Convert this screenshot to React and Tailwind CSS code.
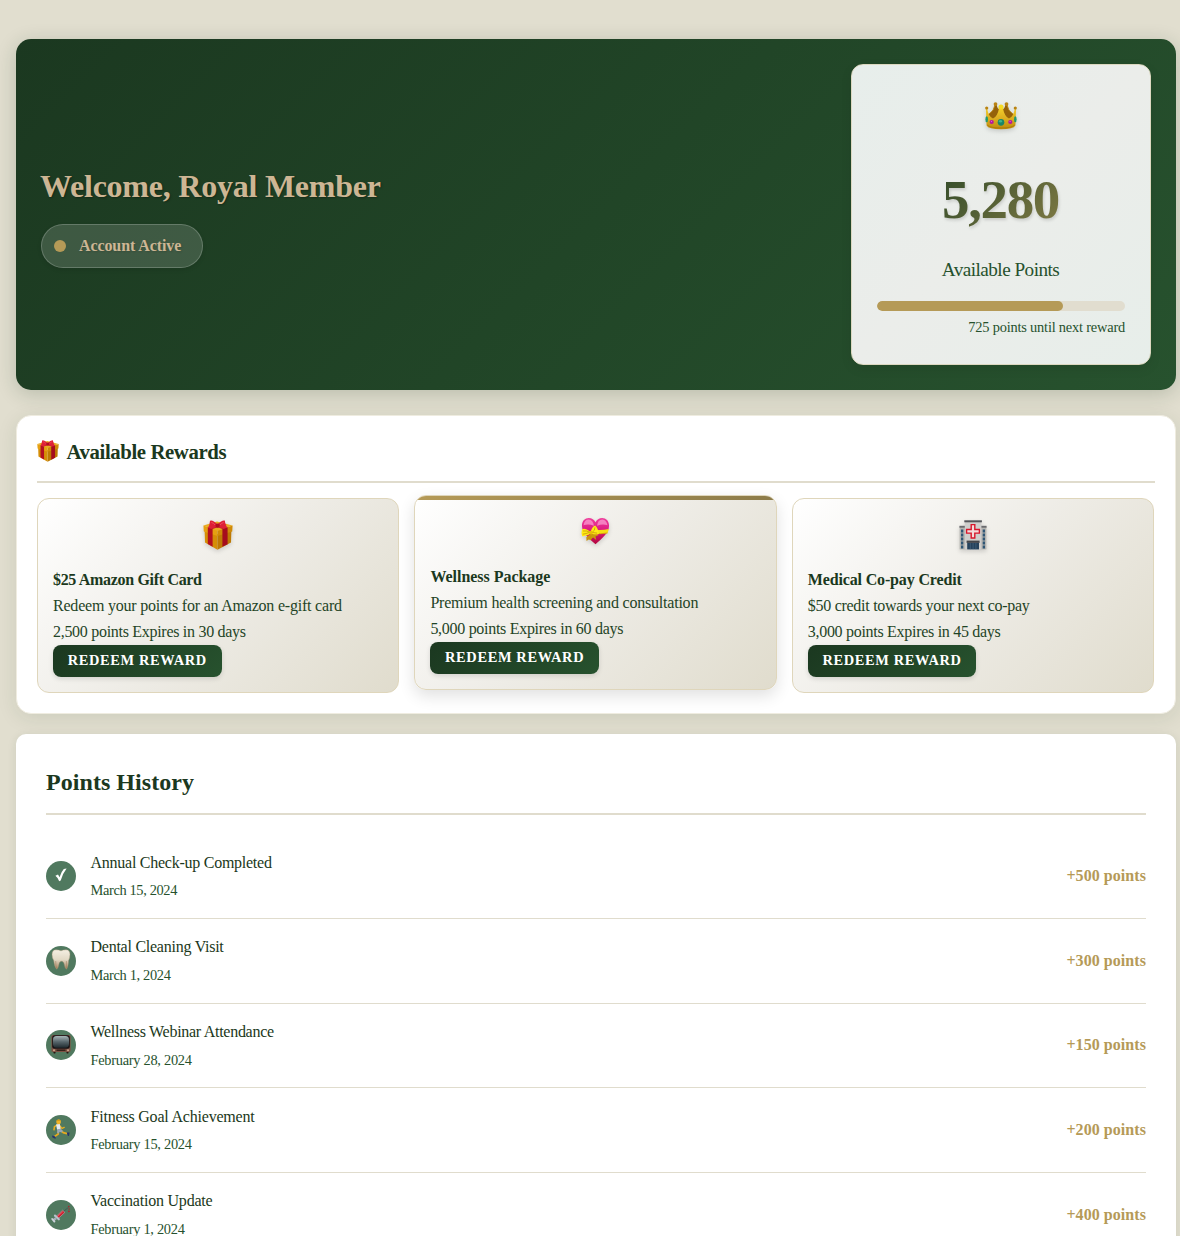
function Crown({ className }) {
  return (
    <svg viewBox="0 0 32 28" className={className}>
      <defs>
        <linearGradient id="crownGold" x1="0" y1="0" x2="0" y2="1">
          <stop offset="0" stopColor="#f3cf2a" />
          <stop offset="0.5" stopColor="#dcae20" />
          <stop offset="1" stopColor="#bd8a0c" />
        </linearGradient>
      </defs>
      <path d="M9.6 2.5 Q9.4 8.5 3 12.5 L4 19 H15.5 L15.5 8 Q12.2 7 11.6 2.5Z M22.4 2.5 Q22.6 8.5 29 12.5 L28 19 H16.5 L16.5 8 Q19.8 7 20.4 2.5Z" fill="#95620a" />
      <path d="M9.9 3 Q9.6 8.5 3.4 12.6 M22.1 3 Q22.4 8.5 28.6 12.6" fill="none" stroke="#c08b14" strokeWidth="0.8" />
      <path d="M0.9 7 H2.3 Q3.4 14.6 8 16.6 Q12.6 14.5 14.2 5.5 H17.8 Q19.4 14.5 24 16.6 Q28.6 14.6 29.7 7 H31.1 L30.4 23.5 Q28.5 27.3 16 27.3 Q3.5 27.3 1.6 23.5 Z" fill="url(#crownGold)" />
      <path d="M2.3 23 Q5 26 16 26 Q27 26 29.7 23" fill="none" stroke="#a87607" strokeWidth="0.8" />
      <g fill="#b98313">
        <circle cx="10.5" cy="2.1" r="1.9" />
        <circle cx="21.5" cy="2.1" r="1.9" />
        <circle cx="1.7" cy="6" r="1.6" />
        <circle cx="30.3" cy="6" r="1.6" />
      </g>
      <circle cx="16" cy="5" r="2.5" fill="#f6dc22" />
      <ellipse cx="16" cy="20.3" rx="3.3" ry="3.4" fill="#1a8767" />
      <ellipse cx="15.5" cy="19.3" rx="1.6" ry="1.3" fill="#3fb58b" />
      <circle cx="6.7" cy="20" r="2.1" fill="#b5159c" />
      <circle cx="25.3" cy="20" r="2.1" fill="#b5159c" />
      <circle cx="6.5" cy="19.5" r="0.7" fill="#e05bd0" />
      <circle cx="25.1" cy="19.5" r="0.7" fill="#e05bd0" />
      <ellipse cx="1.7" cy="17.3" rx="1.3" ry="3" fill="#22996f" />
      <ellipse cx="30.3" cy="17.3" rx="1.3" ry="3" fill="#22996f" />
    </svg>
  );
}

function Gift({ className }) {
  return (
    <svg viewBox="0 0 30 30" className={className}>
      <path d="M1.6 9.5 L14.5 14 V29.7 L2 22.5 Z" fill="#d58e06" />
      <path d="M28.4 9.5 L14.5 14 V29.7 L28 22.5 Z" fill="#bd7a04" />
      <path d="M0.4 5.5 L14.5 10 V16 L0.8 11.6 Z" fill="#e5a011" />
      <path d="M29.6 5.5 L14.5 10 V16 L29.2 11.6 Z" fill="#cf8a08" />
      <path d="M0.4 5.5 L14 1.5 L29.6 5.5 L14.5 11 Z" fill="#e9ab22" />
      <path d="M4.8 7.3 L9.6 8.8 V26.7 L4.8 23.9 Z" fill="#b3101f" />
      <path d="M19.4 8.8 L24.6 7.3 V24.2 L19.4 26.8 Z" fill="#a50c1d" />
      <path d="M4.8 7.3 L19 2.8 L23.5 4.2 L9.6 9 Z M24.6 7.3 L10 2.8 L6.5 4.2 L19.4 9 Z" fill="#c41a2a" />
      <path d="M14.5 4.6 Q9.5 -0.6 7 0.8 Q6.8 5 5 8 Q10 9.2 14.5 6.6 Q20 9.5 24.2 7.7 Q22 5 21.8 0.6 Q19 -0.2 14.5 4.6Z" fill="#de2036" />
      <path d="M8.3 2.4 Q10.5 2.8 12 5 M20.6 2.4 Q18.8 3 17 5" stroke="#ee5267" strokeWidth="0.8" fill="none" />
      <ellipse cx="14.6" cy="5.6" rx="2.1" ry="2.2" fill="#b20d22" />
    </svg>
  );
}

function RibbonHeart({ className }) {
  return (
    <svg viewBox="0 0 30 28" className={className}>
      <defs>
        <linearGradient id="heartPink" x1="0" y1="0" x2="0" y2="1">
          <stop offset="0" stopColor="#ee3f9c" />
          <stop offset="0.4" stopColor="#de1f86" />
          <stop offset="1" stopColor="#b3063c" />
        </linearGradient>
      </defs>
      <path d="M15 27.7 C9 22 1 16.5 1 8.5 C1 3.5 4.2 0.6 8 0.6 C11.3 0.6 13.8 2.3 15 5 C16.2 2.3 18.7 0.6 22 0.6 C25.8 0.6 29 3.5 29 8.5 C29 16.5 21 22 15 27.7Z" fill="url(#heartPink)" />
      <path d="M2.6 8 Q3.5 2 8 2 Q12.5 2.4 13.4 8.5 Q8 6.5 2.6 8Z M16.6 8.5 Q17.5 2 22 2 Q26.5 2.4 27.4 8 Q22 6.5 16.6 8.5Z" fill="#f99bcf" opacity="0.75" />
      <path d="M14 12.6 Q21 13.5 28.8 12 L27.4 16.4 Q20 17.8 14 16.8Z" fill="#f7df12" />
      <path d="M14 16.6 Q20 17.5 27.4 16" stroke="#c98d05" strokeWidth="0.7" fill="none" />
      <path d="M10.5 16.5 L5.5 20.5 L5.7 24.3 L8 22.8 L10.3 23.6 L13 17.5 Z" fill="#c9930a" />
      <path d="M11 16.5 L9.8 22.5 L12.7 20.8 L15.8 23.4 L15 19.8 L18.3 18.2 Z" fill="#c99a0a" />
      <path d="M9.5 14.5 Q4 10.4 1 12.4 Q0 16 1.2 19.4 Q6.5 19.8 10.3 16.4 Q14.5 18.6 18.6 17.2 Q17.8 11.4 14.6 8.4 Q11.6 9.5 10.3 14Z" fill="#ffeb14" />
      <path d="M2 14 Q6 13.4 9.2 15.3 Q5 17 1.8 17.3 M14.4 10.3 Q14.7 13.5 11.5 15.5 L16.7 16.2" stroke="#bd8a05" strokeWidth="0.7" fill="none" />
      <ellipse cx="10.3" cy="15.6" rx="1.8" ry="1.9" fill="#e6be08" />
    </svg>
  );
}

function Hospital({ className }) {
  return (
    <svg viewBox="0 0 28 30" className={className}>
      <rect x="0.6" y="7" width="7" height="22.4" fill="#b4b3b0" />
      <rect x="20.4" y="7" width="7" height="22.4" fill="#b4b3b0" />
      <rect x="0.4" y="5.8" width="6" height="1.9" fill="#6a6b6e" />
      <rect x="21.6" y="5.8" width="6" height="1.9" fill="#6a6b6e" />
      <rect x="5.8" y="1.5" width="16.6" height="27.9" fill="#cfcecc" />
      <rect x="5.3" y="0.3" width="17.6" height="2" fill="#55565a" />
      <g fill="#2f5675">
        <rect x="2" y="9.5" width="2.3" height="3" />
        <rect x="2" y="13.5" width="2.3" height="3" />
        <rect x="2" y="17.5" width="2.3" height="3" />
        <rect x="2" y="21.5" width="2.3" height="3" />
        <rect x="2" y="25.5" width="2.3" height="3" />
        <rect x="23.7" y="9.5" width="2.3" height="3" />
        <rect x="23.7" y="13.5" width="2.3" height="3" />
        <rect x="23.7" y="17.5" width="2.3" height="3" />
        <rect x="23.7" y="21.5" width="2.3" height="3" />
        <rect x="23.7" y="25.5" width="2.3" height="3" />
      </g>
      <path d="M12.2 4.6 h3.6 v4.9 h4.6 v3.6 h-4.6 v4.9 h-3.6 v-4.9 h-4.6 v-3.6 h4.6 Z" fill="#f3dcdc" stroke="#d9162b" strokeWidth="1.4" />
      <rect x="7.6" y="20.6" width="13" height="2.3" fill="#45464a" />
      <rect x="8.2" y="22.9" width="11.8" height="6.5" fill="#26425c" />
      <path d="M11.3 23 v6.4 M14.1 23 v6.4 M16.9 23 v6.4" stroke="#55748c" strokeWidth="0.5" />
    </svg>
  );
}

function Check() {
  return (
    <svg viewBox="0 0 12 14" className="-mt-[2px] h-[14px] w-[12px]">
      <path d="M0.4 7.8 L3 6.4 Q4 7.8 4.5 9.2 Q6.2 3.6 8.8 0.9 L11.6 0.6 Q7.6 5.8 5.7 12.4 L4.2 13.2 Q2.8 9.6 0.4 7.8Z" fill="#fff" />
    </svg>
  );
}

function Tooth() {
  return (
    <svg viewBox="0 0 20 21" className="-mt-[3px] h-[21px] w-[20px]">
      <defs>
        <linearGradient id="toothIvory" x1="0" y1="0" x2="0" y2="1">
          <stop offset="0" stopColor="#f4efe2" />
          <stop offset="0.5" stopColor="#e2d9c5" />
          <stop offset="1" stopColor="#a5835f" />
        </linearGradient>
      </defs>
      <path d="M1 5.5 Q1 0.8 5 0.8 Q8 0.8 10 1.8 Q12 0.8 15 0.8 Q19 0.8 19 5.5 Q19 9 17.6 11.5 Q17.3 18 15.6 20.2 Q13.8 19.5 13.4 16 Q12.8 12.3 10.6 12.3 Q8.2 12.3 7.8 16 Q7.3 19.5 5.6 20.2 Q3.2 17.5 2.7 11.5 Q1 9 1 5.5Z" fill="url(#toothIvory)" stroke="#a18d70" strokeWidth="0.4" />
      <path d="M4.7 12 Q4.7 16 5.4 19 M15.4 12 Q15.6 16 15.2 19" stroke="#9a7452" strokeWidth="0.8" opacity="0.6" fill="none" />
    </svg>
  );
}

function Television() {
  return (
    <svg viewBox="0 0 20 20" className="-mt-[3px] h-[20px] w-[20px]">
      <defs>
        <linearGradient id="tvScreen" x1="0" y1="0" x2="0" y2="1">
          <stop offset="0" stopColor="#a5b3b5" />
          <stop offset="0.5" stopColor="#56656a" />
          <stop offset="1" stopColor="#202c30" />
        </linearGradient>
      </defs>
      <path d="M2 17 h3 l-0.8 2.6 h-1.4Z M15 17 h3 l-0.8 2.6 h-1.4Z" fill="#2a1410" />
      <rect x="0.4" y="1" width="19.2" height="17" rx="1.6" fill="#7c5244" />
      <rect x="1.2" y="1.3" width="17.6" height="13.5" rx="2.5" fill="#171314" />
      <rect x="2" y="2.1" width="16" height="11.6" rx="3.6" fill="url(#tvScreen)" />
      <rect x="5.5" y="15.4" width="9" height="1.6" fill="#352019" />
      <circle cx="3" cy="16.2" r="1" fill="#d1a78e" />
      <circle cx="17" cy="16.2" r="1" fill="#d1a78e" />
    </svg>
  );
}

function Runner() {
  return (
    <svg viewBox="0 0 18 20" className="-mt-[2px] h-[20px] w-[18px]">
      <path d="M6.4 11.5 L6.2 15 L2.6 17.4" stroke="#e5a91f" strokeWidth="1.8" fill="none" strokeLinejoin="round" />
      <path d="M8.5 11.4 L11.4 13.6 L15 14.6" stroke="#e5a91f" strokeWidth="1.8" fill="none" />
      <path d="M5 6 L2.4 7.8 L2 10.8" stroke="#e7ad22" strokeWidth="1.5" fill="none" strokeLinecap="round" />
      <path d="M8 7 L10 9.4 L12.2 8.4" stroke="#e7ad22" strokeWidth="1.4" fill="none" strokeLinecap="round" />
      <path d="M4 5.4 L7.8 4.8 L8.8 10.2 L5.2 10.9Z" fill="#e8ebee" />
      <path d="M5.2 10.2 L8.8 9.8 L11 12 L9.6 13.6 L7.4 12.8 L6.8 14.6 L5.2 14Z" fill="#99a7b5" />
      <circle cx="6.6" cy="2.9" r="2.4" fill="#f0b429" />
      <path d="M4.3 2.3 Q5 0.2 7 0.4 Q8.6 0.7 8.9 1.8Z" fill="#d79b12" />
      <path d="M0 16.6 L3.2 17.6 L4 19.4 L2.4 19.4 L0.3 18.3Z M14.8 13.6 L17.6 13.4 L17 17 L15.8 16.8Z" fill="#29346a" />
    </svg>
  );
}

function Syringe() {
  return (
    <svg viewBox="0 0 20 18" className="-mt-[2px] h-[18px] w-[20px]">
      <path d="M13 6 L17.4 2.4" stroke="#3f4b50" strokeWidth="0.7" />
      <path d="M4.8 11.8 L11.6 5.2 L13.9 7.4 L7 13.8Z" fill="#cf1d2c" stroke="#a7b1b4" strokeWidth="0.6" />
      <path d="M6.5 11.5 L12 6.4" stroke="#f0808a" strokeWidth="0.6" />
      <path d="M4 10.6 L7.8 14.3" stroke="#b8c1cb" strokeWidth="2.2" strokeLinecap="round" />
      <path d="M5 13.2 L2.4 15.3" stroke="#a7b0bb" strokeWidth="2.4" />
      <path d="M1.2 14 L3.4 16.6" stroke="#cdd3da" strokeWidth="1.8" strokeLinecap="round" />
      <circle cx="17.8" cy="1.6" r="0.8" fill="#b61c28" />
      <circle cx="18.1" cy="4" r="0.7" fill="#b61c28" />
      <circle cx="17.9" cy="6.4" r="0.8" fill="#b61c28" />
    </svg>
  );
}

const rewards = [
  {
    icon: <Gift className="-ml-[1px] h-[30px] w-[30px]" />,
    title: "$25 Amazon Gift Card",
    titleClass: "tracking-[-0.322px]",
    text: "Redeem your points for an Amazon e-gift card",
    textClass: "tracking-[-0.212px]",
    meta: "2,500 points Expires in 30 days",
  },
  {
    icon: <RibbonHeart className="-mt-[1px] h-[28px] w-[29px]" />,
    title: "Wellness Package",
    titleClass: "tracking-[-0.029px]",
    text: "Premium health screening and consultation",
    textClass: "tracking-[-0.209px]",
    meta: "5,000 points Expires in 60 days",
    featured: true,
  },
  {
    icon: <Hospital className="h-[30px] w-[28px]" />,
    title: "Medical Co-pay Credit",
    titleClass: "tracking-[-0.151px]",
    text: "$50 credit towards your next co-pay",
    textClass: "tracking-[-0.279px]",
    meta: "3,000 points Expires in 45 days",
  },
];

const history = [
  { icon: <Check />, name: "Annual Check-up Completed", nameClass: "tracking-[-0.255px]", date: "March 15, 2024", dateClass: "tracking-[-0.36px]", points: "+500 points" },
  { icon: <Tooth />, name: "Dental Cleaning Visit", nameClass: "tracking-[-0.25px]", date: "March 1, 2024", dateClass: "tracking-[-0.33px]", points: "+300 points" },
  { icon: <Television />, name: "Wellness Webinar Attendance", nameClass: "tracking-[-0.28px]", date: "February 28, 2024", dateClass: "tracking-[-0.28px]", points: "+150 points" },
  { icon: <Runner />, name: "Fitness Goal Achievement", nameClass: "tracking-[-0.2px]", date: "February 15, 2024", dateClass: "tracking-[-0.28px]", points: "+200 points" },
  { icon: <Syringe />, name: "Vaccination Update", nameClass: "tracking-[-0.21px]", date: "February 1, 2024", dateClass: "tracking-[-0.29px]", points: "+400 points" },
];

function Header() {
  return (
    <header className="flex h-[351px] items-center justify-between rounded-[15px] bg-linear-135 from-[#1b3820] to-[#27522e] p-[25px] shadow-[0_4px_20px_rgba(27,56,32,0.2)]">
      <div>
        <h1 className="-ml-[1px] text-[32px] leading-[51px] font-bold tracking-[-0.233px] text-[#cdb694] [text-shadow:1px_1px_2px_rgba(0,0,0,0.3)]">
          Welcome, Royal Member
        </h1>
        <div className="mt-[12px] mb-[1px] flex h-[44px] w-[162px] items-center rounded-full border border-white/20 bg-white/15 pl-3 shadow-[0_2px_4px_rgba(0,0,0,0.1)]">
          <span className="mr-[13px] size-3 rounded-full bg-[#b59a57]" />
          <span className="font-bold tracking-[-0.1px] text-[#cdb694] [text-shadow:1px_1px_2px_rgba(0,0,0,0.15)]">
            Account Active
          </span>
        </div>
      </div>
      <div className="h-[301px] w-[300px] rounded-xl border border-[#dcd8c0] bg-linear-135 from-[#e7eeeb] via-[#ebedea] to-[#e7eeea] px-[25px] pt-[25px] text-center shadow-[0_4px_12px_rgba(0,0,0,0.08)]">
        <div className="flex h-[51px] items-center justify-center">
          <Crown className="h-[28px] w-[32px] drop-shadow-[0_2px_2px_rgba(0,0,0,0.15)]" />
        </div>
        <div className="mt-[14px] bg-linear-135 from-[#1b3f22] from-10% to-[#b59a57] to-110% bg-clip-text pr-[1px] text-[55px] leading-[89.6px] font-bold tracking-[-1.4px] text-transparent drop-shadow-[1px_2px_1.5px_rgba(0,0,0,0.14)]">
          5,280
        </div>
        <div className="mt-[10.9px] pr-[1px] text-[19.2px] leading-[30.7px] tracking-[-0.53px] text-[#26512d]">Available Points</div>
        <div className="mt-[14.8px] h-[10px] overflow-hidden rounded-full bg-[#e1ddcf]">
          <div className="h-full w-3/4 rounded-full bg-[#b59a57]" />
        </div>
        <div className="mt-[4.8px] text-right text-[14.4px] leading-[23px] tracking-[-0.2px] text-[#26512d]">
          725 points until next reward
        </div>
      </div>
    </header>
  );
}

function RewardCard({ reward }) {
  return (
    <article
      className={
        "relative h-[195px] w-[362.3px] overflow-hidden rounded-xl border border-[#dfd6bb] bg-linear-135 from-white via-[#eeece6] to-[#e0dccd] px-[15px] pt-[15px] " +
        (reward.featured ? "-top-[3px] shadow-[0_6px_16px_rgba(0,0,0,0.12)]" : "")
      }
    >
      {reward.featured && <div className="absolute inset-x-0 top-0 h-1 bg-linear-to-r from-[#b59a57] to-[#8c7b49]" />}
      <div className="mb-[12px] flex h-[41px] items-center justify-center drop-shadow-[0_2px_2px_rgba(0,0,0,0.15)]">{reward.icon}</div>
      <h3 className={"leading-[26px] font-bold " + reward.titleClass}>{reward.title}</h3>
      <p className={"leading-[26px] text-[#1f4426] " + reward.textClass}>{reward.text}</p>
      <p className="leading-[26px] tracking-[-0.292px] text-[#1f4426]">{reward.meta}</p>
      <button className="block h-8 w-[168.5px] rounded-lg bg-linear-135 from-[#1b3820] to-[#27522e] text-[14.4px] leading-[30px] font-bold tracking-[0.647px] text-white shadow-[0_2px_5px_rgba(0,0,0,0.12)]">
        <span className="block pb-[2px]">REDEEM REWARD</span>
      </button>
    </article>
  );
}

function HistoryRow({ item }) {
  return (
    <li className="flex h-[84.6px] items-center border-b border-[#e0dccd]">
      <span className="mr-[14.5px] flex size-[30px] items-center justify-center rounded-full bg-[#50795f]">{item.icon}</span>
      <div className="flex-1">
        <div className={"leading-[25.6px] " + item.nameClass}>{item.name}</div>
        <div className={"mt-1 mb-[0.4px] text-[14.4px] leading-[23px] text-[#26512d] " + item.dateClass}>{item.date}</div>
      </div>
      <span className="font-bold tracking-[0.058px] text-[#b59a57]">{item.points}</span>
    </li>
  );
}

export default function App() {
  return (
    <div className="h-[1236px] w-[1180px] overflow-hidden bg-[#e1decf] pt-[39px] pl-4 font-['Liberation_Serif',serif] text-base text-[#1b3820]">
      <div className="w-[1160px]">
        <Header />
        <section className="mt-[25px] h-[299px] rounded-[15px] border border-[#efece0] bg-white p-5 shadow-[0_4px_20px_rgba(27,56,32,0.1)]">
          <h2 className="mb-[15px] flex h-[47px] border-b-2 border-[#e0dccd] text-[20.8px] leading-[32px] font-bold tracking-[-0.41px]">
            <Gift className="mt-[3.5px] mr-[7.5px] h-[22px] w-[22px]" />
            Available Rewards
          </h2>
          <div className="flex gap-[15.1px]">
            {rewards.map((reward) => (
              <RewardCard key={reward.title} reward={reward} />
            ))}
          </div>
        </section>
        <section className="mt-5 rounded-[10px] bg-white p-[30px] shadow-[0_2px_10px_rgba(27,56,32,0.1)]">
          <h2 className="mb-[19.5px] h-[51px] border-b-2 border-[#e0dccd] text-2xl leading-[37px] font-bold tracking-[0.052px]">
            Points History
          </h2>
          <ul>
            {history.map((item) => (
              <HistoryRow key={item.name} item={item} />
            ))}
          </ul>
        </section>
      </div>
    </div>
  );
}
